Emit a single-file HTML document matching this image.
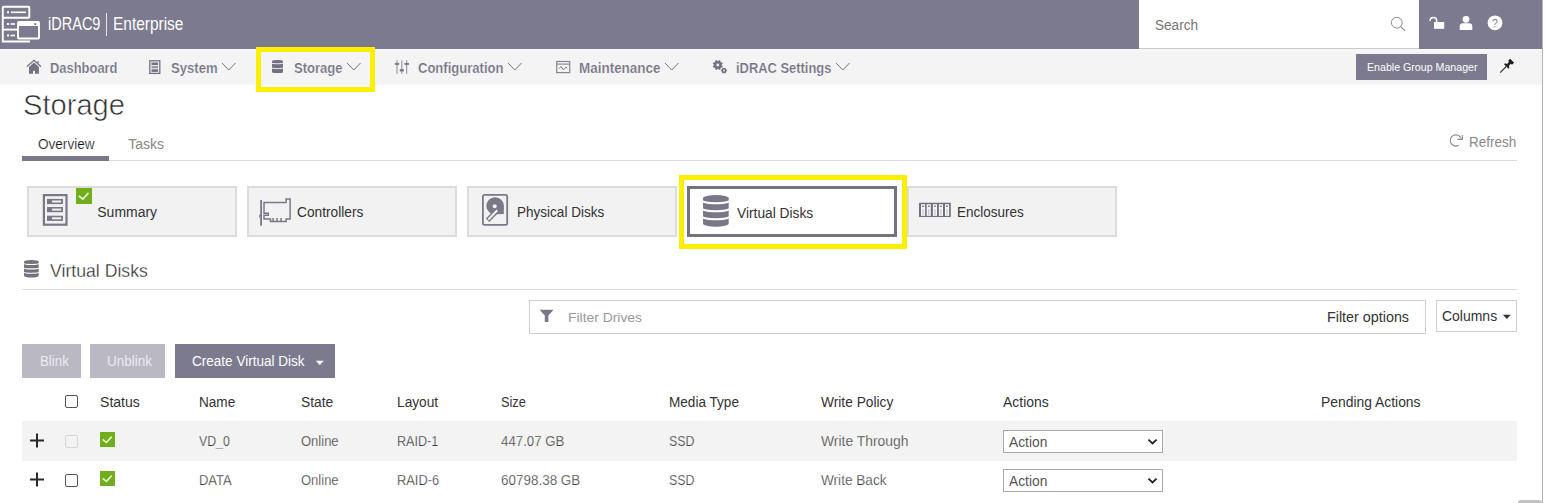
<!DOCTYPE html>
<html><head><meta charset="utf-8">
<style>
*{margin:0;padding:0;box-sizing:border-box}
html,body{width:1545px;height:503px;overflow:hidden;background:#fff;font-family:"Liberation Sans",sans-serif}
.a{position:absolute}
svg.a{overflow:visible}
.t{position:absolute;white-space:nowrap;line-height:1;transform-origin:0 0}
</style></head>
<body>
<div class="a" style="left:0px;top:0px;width:1542px;height:49px;background:#7c7a8e"></div>
<div class="a" style="left:0px;top:49px;width:1542px;height:36px;background:#f4f4f4"></div>
<div class="a" style="left:0px;top:49px;width:1542px;height:2px;background:#f8f8f8"></div>
<div class="a" style="left:1542px;top:0px;width:1px;height:503px;background:#b4b4b4"></div>
<svg class="a" style="left:0px;top:0px" width="44" height="48" viewBox="0 0 44 48"><g fill="none" stroke="#fff" stroke-width="1.9"><rect x="2.8" y="6.8" width="26.5" height="11" rx="0.8"/><path d="M2.8 17.8 V41.5 H30"/><path d="M2.8 29.6 H17"/><rect x="18" y="22" width="21" height="16.5" rx="0.8"/></g><g fill="#fff"><rect x="7" y="11.3" width="2" height="2"/><rect x="11" y="11.5" width="15" height="1.6"/><rect x="7" y="23" width="2" height="2"/><rect x="10.5" y="23.2" width="4.5" height="1.6"/><rect x="7" y="34.5" width="2" height="2"/><rect x="10.5" y="34.7" width="4.5" height="1.6"/><rect x="18" y="22" width="21" height="4"/></g><rect x="34.2" y="23.2" width="2" height="1.8" fill="#7c7a8e"/></svg>
<div class="t" style="left:47.50px;top:16.12px;font-size:17.46px;color:#fff;transform:scaleX(0.8326);">iDRAC9</div>
<div class="a" style="left:106px;top:13px;width:1px;height:23px;background:#e6e5ec"></div>
<div class="t" style="left:112.50px;top:16.12px;font-size:17.46px;color:#fff;transform:scaleX(0.8860);">Enterprise</div>
<div class="a" style="left:1139px;top:0px;width:280px;height:49px;background:#fff;border-bottom:1px solid #c9c9c9"></div>
<div class="t" style="left:1155.00px;top:19.08px;font-size:13.97px;color:#757575;transform:scaleX(0.9717);">Search</div>
<svg class="a" style="left:1388px;top:14px" width="20" height="20" viewBox="0 0 20 20"><circle cx="8.8" cy="8.7" r="5.4" fill="none" stroke="#8a8a8a" stroke-width="1"/><path d="M12.7 12.6 L17 16.8" stroke="#8a8a8a" stroke-width="1.1"/></svg>
<svg class="a" style="left:1428px;top:14px" width="20" height="18" viewBox="0 0 20 18"><path d="M2.1 6.9 A3.3 3.3 0 0 1 8.7 6.5 V8.2" fill="none" stroke="#fff" stroke-width="1.5"/><rect x="6" y="8" width="10.2" height="6.8" fill="#fff"/></svg>
<svg class="a" style="left:1458px;top:14px" width="16" height="17" viewBox="0 0 16 17"><circle cx="8" cy="5.3" r="3.4" fill="#fff"/><path d="M1.7 15.9 V12.2 Q1.7 9.2 5 9.2 H11 Q14.3 9.2 14.3 12.2 V15.9 Z" fill="#fff"/></svg>
<svg class="a" style="left:1486px;top:14px" width="18" height="18" viewBox="0 0 18 18"><circle cx="9" cy="8.8" r="7.4" fill="#fff"/><text x="9" y="12.6" font-size="10.5" text-anchor="middle" fill="#7c7a8e" font-family="Liberation Sans">?</text></svg>
<svg class="a" style="left:26px;top:58px" width="18" height="17" viewBox="0 0 18 17"><path d="M1 8.6 L8 2.3 L15 8.8" fill="none" stroke="#737283" stroke-width="1.3"/><rect x="11.5" y="3" width="1.2" height="2.6" fill="#737283"/><path d="M3 8.9 L8 4.6 L12.9 8.9 V15.7 H9 V12.8 H7.1 V15.7 H3 Z" fill="#737283"/></svg>
<div class="t" style="left:50.00px;top:61.06px;font-size:14.11px;color:#737283;font-weight:bold;transform:scaleX(0.9161);-webkit-text-stroke:0.2px #f4f4f4;">Dashboard</div>
<svg class="a" style="left:149px;top:60px" width="12" height="14" viewBox="0 0 12 14"><rect x="0.8" y="0.8" width="10" height="12.6" fill="none" stroke="#737283" stroke-width="1.3"/><rect x="2.5" y="2.5" width="6.6" height="2.6" fill="#737283"/><rect x="2.5" y="6" width="6.6" height="2.4" fill="#737283" opacity="0.7"/><rect x="2.5" y="9.3" width="6.6" height="2.6" fill="#737283"/></svg>
<div class="t" style="left:171.00px;top:61.06px;font-size:14.11px;color:#737283;font-weight:bold;transform:scaleX(0.9285);-webkit-text-stroke:0.2px #f4f4f4;">System</div>
<svg class="a" style="left:221px;top:62px" width="15.5" height="9" viewBox="0 0 15.5 9"><path d="M1 1 L7.75 8 L14.5 1" fill="none" stroke="#737283" stroke-width="1"/></svg>
<svg class="a" style="left:271.9px;top:60.2px" width="11" height="13.1" viewBox="0 0 11 13.1"><ellipse cx="5.5" cy="1.1789999999999998" rx="5.5" ry="1.1789999999999998" fill="#737283"/><path d="M0 1.1789999999999998 V11.921 A5.5 1.1789999999999998 0 0 0 11 11.921 V1.1789999999999998 Z" fill="#737283"/><path d="M-0.5 2.95 A6.0 0.79 0 0 0 11.5 2.95" fill="none" stroke="#f4f4f4" stroke-width="0.98"/><path d="M-0.5 7.79 A6.0 0.79 0 0 0 11.5 7.79" fill="none" stroke="#f4f4f4" stroke-width="0.98"/></svg>
<div class="t" style="left:293.50px;top:61.06px;font-size:14.11px;color:#737283;font-weight:bold;transform:scaleX(0.9234);-webkit-text-stroke:0.2px #f4f4f4;">Storage</div>
<svg class="a" style="left:345.5px;top:62px" width="15.5" height="9" viewBox="0 0 15.5 9"><path d="M1 1 L7.75 8 L14.5 1" fill="none" stroke="#737283" stroke-width="1"/></svg>
<svg class="a" style="left:394px;top:59px" width="16" height="16" viewBox="0 0 16 16"><g stroke="#9b9aa6" stroke-width="1.2"><path d="M3 1.2 V14.7"/><path d="M7.8 1.2 V14.7"/><path d="M12.6 1.2 V14.7"/></g><g fill="#737283"><rect x="0.8" y="4.1" width="4.4" height="1.7"/><rect x="5.8" y="10.2" width="4" height="2.2"/><rect x="10.4" y="4.1" width="4.6" height="1.7"/></g></svg>
<div class="t" style="left:417.60px;top:61.06px;font-size:14.11px;color:#737283;font-weight:bold;transform:scaleX(0.9237);-webkit-text-stroke:0.2px #f4f4f4;">Configuration</div>
<svg class="a" style="left:506.5px;top:62px" width="15.5" height="9" viewBox="0 0 15.5 9"><path d="M1 1 L7.75 8 L14.5 1" fill="none" stroke="#737283" stroke-width="1"/></svg>
<svg class="a" style="left:555px;top:60px" width="16" height="14" viewBox="0 0 16 14"><rect x="1.7" y="1.5" width="13" height="11.1" fill="none" stroke="#858492" stroke-width="1.2"/><path d="M1.7 4.1 H14.7" stroke="#858492" stroke-width="1.1"/><path d="M4 8.7 L6 6.5 L8.4 9.8 L11 7.1 L12.1 8" fill="none" stroke="#777684" stroke-width="1"/></svg>
<div class="t" style="left:578.70px;top:61.06px;font-size:14.11px;color:#737283;font-weight:bold;transform:scaleX(0.9538);-webkit-text-stroke:0.2px #f4f4f4;">Maintenance</div>
<svg class="a" style="left:663.5px;top:62px" width="15.5" height="9" viewBox="0 0 15.5 9"><path d="M1 1 L7.75 8 L14.5 1" fill="none" stroke="#737283" stroke-width="1"/></svg>
<svg class="a" style="left:711px;top:59px" width="17" height="16" viewBox="0 0 17 16"><circle cx="6.8" cy="6" r="3.9" fill="#737283"/><path d="M6.80 6.00 L11.51 7.95 M6.80 6.00 L8.75 10.71 M6.80 6.00 L4.85 10.71 M6.80 6.00 L2.09 7.95 M6.80 6.00 L2.09 4.05 M6.80 6.00 L4.85 1.29 M6.80 6.00 L8.75 1.29 M6.80 6.00 L11.51 4.05 " stroke="#737283" stroke-width="1.9"/><circle cx="6.8" cy="6" r="1.4" fill="#f4f4f4"/><circle cx="13" cy="11.6" r="1.9" fill="none" stroke="#737283" stroke-width="1.3"/><path d="M13.00 11.60 L16.10 11.60 M13.00 11.60 L14.55 14.28 M13.00 11.60 L11.45 14.28 M13.00 11.60 L9.90 11.60 M13.00 11.60 L11.45 8.92 M13.00 11.60 L14.55 8.92 " stroke="#737283" stroke-width="1"/><circle cx="13" cy="11.6" r="0.9" fill="#f4f4f4"/></svg>
<div class="t" style="left:735.70px;top:61.06px;font-size:14.11px;color:#737283;font-weight:bold;transform:scaleX(0.9143);-webkit-text-stroke:0.2px #f4f4f4;">iDRAC Settings</div>
<svg class="a" style="left:834.5px;top:62px" width="15.5" height="9" viewBox="0 0 15.5 9"><path d="M1 1 L7.75 8 L14.5 1" fill="none" stroke="#737283" stroke-width="1"/></svg>
<div class="a" style="left:1356px;top:54px;width:131px;height:26px;background:#7c7a8e"></div>
<div class="t" style="left:1366.50px;top:62.14px;font-size:11.17px;color:#fff;transform:scaleX(0.9530);">Enable Group Manager</div>
<svg class="a" style="left:1495px;top:54px" width="25" height="24" viewBox="0 0 25 24"><g transform="translate(5.2 18.6) rotate(-45)"><path d="M0 0 H9" stroke="#222" stroke-width="1.1"/><path d="M8.6 -3.2 H9.9 L10.8 -1.3 H13.4 L14.3 -2.8 H16.9 V2.8 H14.3 L13.4 1.3 H10.8 L9.9 3.2 H8.6 Z" fill="#222"/></g></svg>
<div class="t" style="left:23.00px;top:89.97px;font-size:29.33px;color:#2e2e2e;transform:scaleX(0.9929);-webkit-text-stroke:0.6px #fff;">Storage</div>
<div class="t" style="left:37.50px;top:138.08px;font-size:13.97px;color:#111;transform:scaleX(0.9707);-webkit-text-stroke:0.2px #fff;">Overview</div>
<div class="t" style="left:128.30px;top:138.08px;font-size:13.97px;color:#888;">Tasks</div>
<div class="a" style="left:22px;top:160px;width:1495px;height:1px;background:#dcdcdc"></div>
<div class="a" style="left:22px;top:156px;width:87px;height:5px;background:#7a7888"></div>
<svg class="a" style="left:1448px;top:133px" width="18" height="16" viewBox="0 0 18 16"><path d="M13.1 5.6 A5.6 5.6 0 1 0 10.7 12.3" fill="none" stroke="#8a8a8a" stroke-width="1.1"/><path d="M9.4 6.4 H14.3 V2" fill="none" stroke="#8a8a8a" stroke-width="1.1"/></svg>
<div class="t" style="left:1469.00px;top:135.68px;font-size:13.97px;color:#888;transform:scaleX(0.9672);">Refresh</div>
<div class="a" style="left:27px;top:186px;width:210px;height:51px;background:#f2f2f2;border:2px solid #dcdcdc"></div>
<div class="a" style="left:247px;top:186px;width:210px;height:51px;background:#f2f2f2;border:2px solid #dcdcdc"></div>
<div class="a" style="left:467px;top:186px;width:210px;height:51px;background:#f2f2f2;border:2px solid #dcdcdc"></div>
<div class="a" style="left:687px;top:186px;width:210px;height:51px;background:#fff;border:3px solid #74727f"></div>
<div class="a" style="left:907px;top:186px;width:210px;height:51px;background:#f2f2f2;border:2px solid #dcdcdc"></div>
<svg class="a" style="left:42px;top:193px" width="27" height="34" viewBox="0 0 27 34"><rect x="1.9" y="2.1" width="22.6" height="29.6" fill="none" stroke="#7a7888" stroke-width="2.2"/><rect x="5" y="5.9" width="16" height="5.2" fill="#7a7888"/><rect x="10" y="7.5" width="9.2" height="2" fill="#f2f2f2"/><rect x="5" y="14" width="16" height="5.2" fill="#7a7888"/><rect x="10" y="15.6" width="9.2" height="2" fill="#f2f2f2"/><rect x="5" y="22.7" width="16" height="5.2" fill="#7a7888"/><rect x="10" y="24.3" width="9.2" height="2" fill="#f2f2f2"/></svg>
<svg class="a" style="left:76px;top:188px" width="16" height="16" viewBox="0 0 16 16"><rect width="16" height="16" fill="#70ae1c"/><path d="M2.8 8.0 L6.9 11.0 L12.5 4.9" fill="none" stroke="#e4f4cc" stroke-width="1.7"/></svg>
<div class="t" style="left:97.30px;top:205.98px;font-size:13.97px;color:#333;">Summary</div>
<svg class="a" style="left:255px;top:195px" width="40" height="32" viewBox="0 0 40 32"><rect x="5.2" y="5" width="1.8" height="25.7" fill="#7a7888"/><rect x="4.2" y="19.6" width="1.2" height="3" fill="#7a7888"/><path d="M9 18.2 V7.6 H31.1 V3.9 H35.1 V23.9 H31.1 V26.5 H15.5 V23.9 H9 V20.3 H13.3 V18.2 Z" fill="none" stroke="#7a7888" stroke-width="1.5"/><rect x="17.4" y="23" width="1.5" height="3.5" fill="#7a7888"/><rect x="21.3" y="23" width="1.5" height="3.5" fill="#7a7888"/><rect x="25.3" y="23" width="1.5" height="3.5" fill="#7a7888"/></svg>
<div class="t" style="left:296.60px;top:206.08px;font-size:13.97px;color:#333;transform:scaleX(0.9818);">Controllers</div>
<svg class="a" style="left:480px;top:192px" width="30" height="36" viewBox="0 0 30 36"><rect x="2.9" y="2.9" width="24.3" height="30" rx="1.5" fill="none" stroke="#7a7888" stroke-width="1.8"/><circle cx="15.1" cy="13.9" r="8.7" fill="#7a7888"/><rect x="15.1" y="13.9" width="8.7" height="8.2" fill="#7a7888"/><circle cx="14.7" cy="14.2" r="2" fill="#f2f2f2"/><path d="M7.6 28.2 L17.6 18" stroke="#7a7888" stroke-width="4.8"/><path d="M8.3 27.5 L17.3 18.3" stroke="#f2f2f2" stroke-width="2"/></svg>
<div class="t" style="left:516.80px;top:205.98px;font-size:13.97px;color:#333;transform:scaleX(0.9686);">Physical Disks</div>
<svg class="a" style="left:703.2px;top:195px" width="25.7" height="31.8" viewBox="0 0 25.7 31.8"><ellipse cx="12.85" cy="3.18" rx="12.85" ry="3.18" fill="#7a7888"/><path d="M0 3.18 V28.62 A12.85 3.18 0 0 0 25.7 28.62 V3.18 Z" fill="#7a7888"/><path d="M-0.5 5.56 A13.35 2.70 0 0 0 26.2 5.56" fill="none" stroke="#fff" stroke-width="2.00"/><path d="M-0.5 13.52 A13.35 2.70 0 0 0 26.2 13.52" fill="none" stroke="#fff" stroke-width="2.00"/><path d="M-0.5 21.47 A13.35 2.70 0 0 0 26.2 21.47" fill="none" stroke="#fff" stroke-width="2.00"/></svg>
<div class="t" style="left:737.10px;top:206.39px;font-size:14.66px;color:#333;transform:scaleX(0.9394);">Virtual Disks</div>
<svg class="a" style="left:919px;top:202px" width="32" height="16" viewBox="0 0 32 16"><rect x="0" y="0.8" width="31.8" height="14.2" rx="0.6" fill="#716f7d"/><rect x="2" y="2.2" width="4.1" height="11.7" fill="#f6f6f8"/><rect x="3.2" y="3.6" width="1.7" height="1.4" fill="#716f7d"/><rect x="3.45" y="7" width="1.2" height="6.3" fill="#c4c3cb"/><rect x="7.7" y="2.2" width="4.1" height="11.7" fill="#f6f6f8"/><rect x="8.9" y="3.6" width="1.7" height="1.4" fill="#716f7d"/><rect x="9.15" y="7" width="1.2" height="6.3" fill="#c4c3cb"/><rect x="13.9" y="2.2" width="4.1" height="11.7" fill="#f6f6f8"/><rect x="15.1" y="3.6" width="1.7" height="1.4" fill="#716f7d"/><rect x="15.35" y="7" width="1.2" height="6.3" fill="#c4c3cb"/><rect x="19.9" y="2.2" width="4.1" height="11.7" fill="#f6f6f8"/><rect x="21.099999999999998" y="3.6" width="1.7" height="1.4" fill="#716f7d"/><rect x="21.349999999999998" y="7" width="1.2" height="6.3" fill="#c4c3cb"/><rect x="26" y="2.2" width="4.1" height="11.7" fill="#f6f6f8"/><rect x="27.2" y="3.6" width="1.7" height="1.4" fill="#716f7d"/><rect x="27.45" y="7" width="1.2" height="6.3" fill="#c4c3cb"/></svg>
<div class="t" style="left:956.60px;top:206.08px;font-size:13.97px;color:#333;transform:scaleX(0.9668);">Enclosures</div>
<div class="a" style="left:256px;top:47px;width:119px;height:45px;border:5px solid #fcef00"></div>
<div class="a" style="left:679px;top:175px;width:228px;height:74px;border:5px solid #fcef00"></div>
<svg class="a" style="left:23.9px;top:260.1px" width="14.7" height="17.4" viewBox="0 0 14.7 17.4"><ellipse cx="7.35" cy="1.74" rx="7.35" ry="1.74" fill="#73727d"/><path d="M0 1.74 V15.659999999999998 A7.35 1.74 0 0 0 14.7 15.659999999999998 V1.74 Z" fill="#73727d"/><path d="M-0.5 3.04 A7.85 1.48 0 0 0 15.2 3.04" fill="none" stroke="#fff" stroke-width="1.10"/><path d="M-0.5 7.39 A7.85 1.48 0 0 0 15.2 7.39" fill="none" stroke="#fff" stroke-width="1.10"/><path d="M-0.5 11.74 A7.85 1.48 0 0 0 15.2 11.74" fill="none" stroke="#fff" stroke-width="1.10"/></svg>
<div class="t" style="left:49.70px;top:261.93px;font-size:18.16px;color:#2a2a2a;transform:scaleX(0.9725);-webkit-text-stroke:0.3px #fff;">Virtual Disks</div>
<div class="a" style="left:22px;top:289px;width:1495px;height:1px;background:#dcdcdc"></div>
<div class="a" style="left:529px;top:300px;width:897px;height:34px;border:1px solid #cfcfcf;background:#fff"></div>
<svg class="a" style="left:539px;top:309px" width="16" height="14" viewBox="0 0 16 14"><path d="M0.6 0.7 H14.6 L9.4 6.4 V12.9 H5.8 V6.4 Z" fill="#7a7888"/></svg>
<div class="t" style="left:568.00px;top:311.21px;font-size:13.69px;color:#999;transform:scaleX(1.0137);">Filter Drives</div>
<div class="t" style="left:1327.00px;top:310.78px;font-size:13.97px;color:#333;transform:scaleX(1.0256);">Filter options</div>
<div class="a" style="left:1436px;top:300px;width:81px;height:32px;border:1px solid #cfcfcf;background:#fff"></div>
<div class="t" style="left:1442.00px;top:310.38px;font-size:13.97px;color:#333;">Columns</div>
<svg class="a" style="left:1502.2px;top:314.2px" width="10" height="6" viewBox="0 0 10 6"><path d="M0.8 0.8 H8.8 L4.8 5 Z" fill="#333"/></svg>
<div class="a" style="left:22px;top:344px;width:59px;height:34px;background:#b9b8c3"></div>
<div class="t" style="left:39.60px;top:355.08px;font-size:13.97px;color:#ebebf0;transform:scaleX(0.9513);">Blink</div>
<div class="a" style="left:90px;top:344px;width:75px;height:34px;background:#b9b8c3"></div>
<div class="t" style="left:107.00px;top:355.08px;font-size:13.97px;color:#ebebf0;transform:scaleX(0.9661);">Unblink</div>
<div class="a" style="left:175px;top:344px;width:160px;height:34px;background:#7c7a8e"></div>
<div class="t" style="left:192.40px;top:355.08px;font-size:13.97px;color:#fff;transform:scaleX(0.9692);">Create Virtual Disk</div>
<svg class="a" style="left:314.6px;top:359.6px" width="10" height="6" viewBox="0 0 10 6"><path d="M0.8 0.8 H8.8 L4.8 5 Z" fill="#fff"/></svg>
<div class="t" style="left:100.00px;top:395.12px;font-size:14.39px;color:#333;transform:scaleX(0.9784);">Status</div>
<div class="t" style="left:199.40px;top:395.12px;font-size:14.39px;color:#333;transform:scaleX(0.9433);">Name</div>
<div class="t" style="left:301.30px;top:395.12px;font-size:14.39px;color:#333;transform:scaleX(0.9586);">State</div>
<div class="t" style="left:397.40px;top:395.12px;font-size:14.39px;color:#333;transform:scaleX(0.9539);">Layout</div>
<div class="t" style="left:500.70px;top:395.12px;font-size:14.39px;color:#333;transform:scaleX(0.8898);">Size</div>
<div class="t" style="left:668.50px;top:395.12px;font-size:14.39px;color:#333;transform:scaleX(0.9446);">Media Type</div>
<div class="t" style="left:821.00px;top:395.12px;font-size:14.39px;color:#333;transform:scaleX(0.9567);">Write Policy</div>
<div class="t" style="left:1003.40px;top:395.12px;font-size:14.39px;color:#333;transform:scaleX(0.9708);">Actions</div>
<div class="t" style="left:1321.00px;top:395.12px;font-size:14.39px;color:#333;transform:scaleX(0.9654);">Pending Actions</div>
<div class="a" style="left:65px;top:395px;width:13px;height:13px;border:1px solid #555;border-radius:2px;background:#fff"></div>
<div class="a" style="left:22px;top:421px;width:1495px;height:40px;background:#f3f3f3"></div>
<svg class="a" style="left:29px;top:432.5px" width="16" height="16" viewBox="0 0 16 16"><path d="M1 7.5 H15 M8 0.5 V14.5" stroke="#2a2a2a" stroke-width="2"/></svg>
<div class="a" style="left:65px;top:435px;width:13px;height:13px;border:1px solid #d6d6d6;border-radius:2px;background:#f3f3f3"></div>
<svg class="a" style="left:100px;top:432px" width="15" height="15" viewBox="0 0 15 15"><rect width="15" height="15" fill="#70ae1c"/><path d="M2.625 7.5 L6.46875 10.3125 L11.71875 4.59375" fill="none" stroke="#e4f4cc" stroke-width="1.59375"/></svg>
<div class="t" style="left:199.40px;top:435.08px;font-size:13.97px;color:#3c3c3c;transform:scaleX(0.8816);-webkit-text-stroke:0.25px #f3f3f3;">VD_0</div>
<div class="t" style="left:301.30px;top:435.08px;font-size:13.97px;color:#3c3c3c;transform:scaleX(0.9313);-webkit-text-stroke:0.25px #f3f3f3;">Online</div>
<div class="t" style="left:397.40px;top:435.08px;font-size:13.97px;color:#3c3c3c;transform:scaleX(0.8998);-webkit-text-stroke:0.25px #f3f3f3;">RAID-1</div>
<div class="t" style="left:500.70px;top:435.08px;font-size:13.97px;color:#3c3c3c;transform:scaleX(0.9494);-webkit-text-stroke:0.25px #f3f3f3;">447.07 GB</div>
<div class="t" style="left:668.50px;top:435.08px;font-size:13.97px;color:#3c3c3c;transform:scaleX(0.8879);-webkit-text-stroke:0.25px #f3f3f3;">SSD</div>
<div class="t" style="left:821.00px;top:435.08px;font-size:13.97px;color:#3c3c3c;transform:scaleX(0.9945);-webkit-text-stroke:0.25px #f3f3f3;">Write Through</div>
<div class="a" style="left:1003px;top:430px;width:160px;height:23px;border:1px solid #aaa;background:#fff"></div>
<div class="t" style="left:1008.60px;top:436.08px;font-size:13.97px;color:#555;transform:scaleX(0.9867);">Action</div>
<svg class="a" style="left:1147px;top:438px" width="12" height="8" viewBox="0 0 12 8"><path d="M1.4 1.6 L5.5 5.5 L9.6 1.6" fill="none" stroke="#222" stroke-width="1.8"/></svg>
<svg class="a" style="left:29px;top:471.5px" width="16" height="16" viewBox="0 0 16 16"><path d="M1 7.5 H15 M8 0.5 V14.5" stroke="#2a2a2a" stroke-width="2"/></svg>
<div class="a" style="left:65px;top:474px;width:13px;height:13px;border:1px solid #555;border-radius:2px;background:#fff"></div>
<svg class="a" style="left:100px;top:471px" width="15" height="15" viewBox="0 0 15 15"><rect width="15" height="15" fill="#70ae1c"/><path d="M2.625 7.5 L6.46875 10.3125 L11.71875 4.59375" fill="none" stroke="#e4f4cc" stroke-width="1.59375"/></svg>
<div class="t" style="left:199.40px;top:474.08px;font-size:13.97px;color:#3c3c3c;transform:scaleX(0.9267);-webkit-text-stroke:0.25px #fff;">DATA</div>
<div class="t" style="left:301.30px;top:474.08px;font-size:13.97px;color:#3c3c3c;transform:scaleX(0.9313);-webkit-text-stroke:0.25px #fff;">Online</div>
<div class="t" style="left:397.40px;top:474.08px;font-size:13.97px;color:#3c3c3c;transform:scaleX(0.9195);-webkit-text-stroke:0.25px #fff;">RAID-6</div>
<div class="t" style="left:500.70px;top:474.08px;font-size:13.97px;color:#3c3c3c;transform:scaleX(0.9634);-webkit-text-stroke:0.25px #fff;">60798.38 GB</div>
<div class="t" style="left:668.50px;top:474.08px;font-size:13.97px;color:#3c3c3c;transform:scaleX(0.8879);-webkit-text-stroke:0.25px #fff;">SSD</div>
<div class="t" style="left:821.00px;top:474.08px;font-size:13.97px;color:#3c3c3c;transform:scaleX(0.9738);-webkit-text-stroke:0.25px #fff;">Write Back</div>
<div class="a" style="left:1003px;top:469px;width:160px;height:23px;border:1px solid #aaa;background:#fff"></div>
<div class="t" style="left:1008.60px;top:475.08px;font-size:13.97px;color:#555;transform:scaleX(0.9867);">Action</div>
<svg class="a" style="left:1147px;top:477px" width="12" height="8" viewBox="0 0 12 8"><path d="M1.4 1.6 L5.5 5.5 L9.6 1.6" fill="none" stroke="#222" stroke-width="1.8"/></svg>
<div class="a" style="left:1518px;top:500px;width:24px;height:3px;background:#c1c1c1;border-radius:3px 3px 0 0"></div>
</body></html>
